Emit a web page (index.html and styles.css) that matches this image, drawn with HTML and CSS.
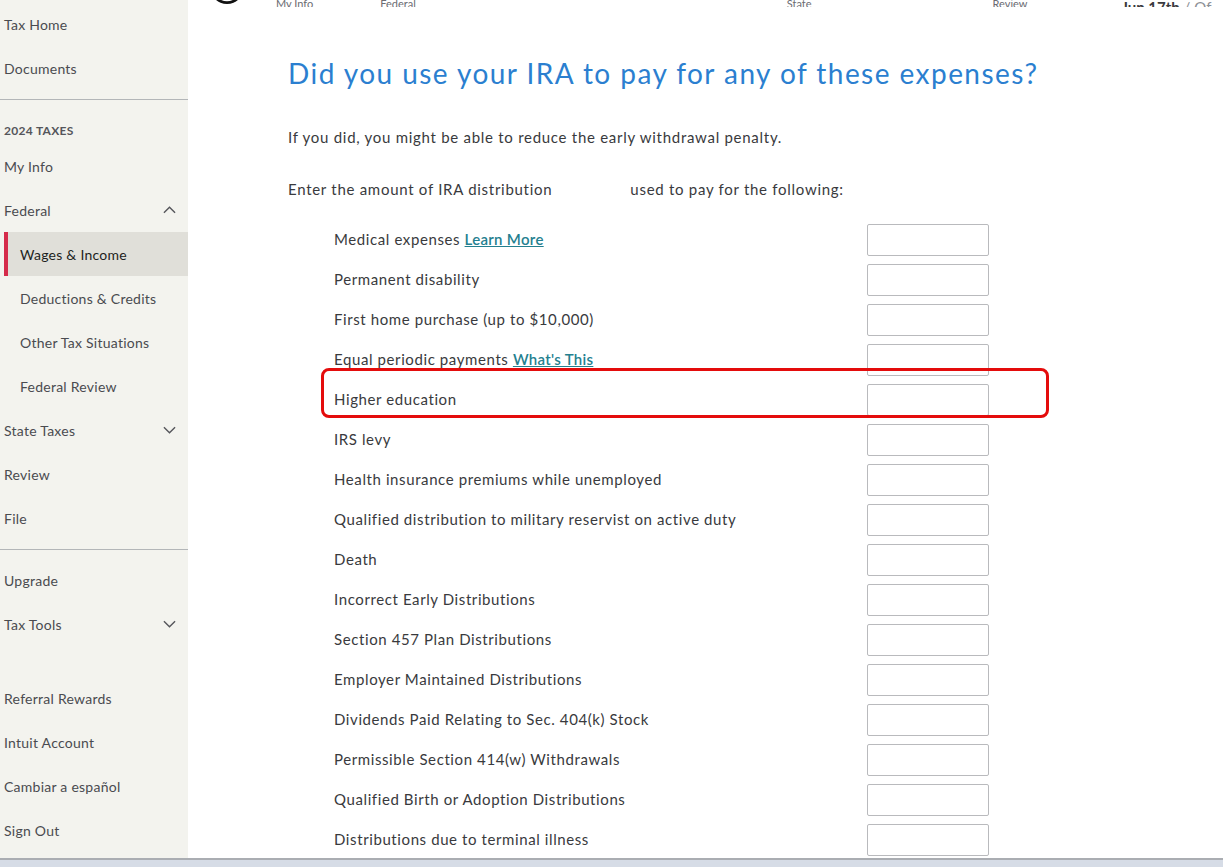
FILE: index.html
```html
<!DOCTYPE html>
<html lang="en">
<head>
  <meta charset="UTF-8">
  <meta name="viewport" content="width=device-width, initial-scale=1.0">
  <title>TurboTax - IRA Expenses</title>
  <link rel="stylesheet" href="styles.css">
</head>
<body>
  <div class="app">
    <nav class="sidebar">
      <a class="nav-item">Tax Home</a>
      <a class="nav-item">Documents</a>
      <hr class="nav-divider">
      <div class="nav-heading">2024 TAXES</div>
      <a class="nav-item">My Info</a>
      <a class="nav-item has-chevron">Federal
        <svg class="chevron" viewBox="0 0 14 8"><path d="M1 7 L7 1 L13 7"/></svg>
      </a>
      <a class="nav-item sub active">Wages &amp; Income</a>
      <a class="nav-item sub">Deductions &amp; Credits</a>
      <a class="nav-item sub">Other Tax Situations</a>
      <a class="nav-item sub">Federal Review</a>
      <a class="nav-item has-chevron">State Taxes
        <svg class="chevron" viewBox="0 0 14 8"><path d="M1 1 L7 7 L13 1"/></svg>
      </a>
      <a class="nav-item">Review</a>
      <a class="nav-item">File</a>
      <hr class="nav-divider">
      <a class="nav-item">Upgrade</a>
      <a class="nav-item has-chevron">Tax Tools
        <svg class="chevron" viewBox="0 0 14 8"><path d="M1 1 L7 7 L13 1"/></svg>
      </a>
      <div class="nav-gap"></div>
      <a class="nav-item">Referral Rewards</a>
      <a class="nav-item">Intuit Account</a>
      <a class="nav-item">Cambiar a español</a>
      <a class="nav-item">Sign Out</a>
    </nav>

    <main class="content">
      <header class="steps">
        <div class="steps-inner">
          <svg class="logo" viewBox="0 0 36 36"><circle cx="18" cy="18" r="17" fill="#111"/><path d="M8 27 Q18 35 28 27" stroke="#fff" stroke-width="2.5" fill="none"/></svg>
          <span class="step step-myinfo">My Info</span>
          <span class="step step-federal">Federal</span>
          <span class="step step-state">State</span>
          <span class="step step-review">Review</span>
          <span class="step-date"><b>Jun 17th</b> / Of</span>
        </div>
      </header>

      <h1 class="title">Did you use your IRA to pay for any of these expenses?</h1>
      <p class="intro">If you did, you might be able to reduce the early withdrawal penalty.</p>
      <p class="intro">Enter the amount of IRA distribution<span class="redacted"></span>used to pay for the following:</p>

      <div class="expense-list">
        <label class="expense-row"><span>Medical expenses <a class="link">Learn More</a></span><input type="text"></label>
        <label class="expense-row"><span>Permanent disability</span><input type="text"></label>
        <label class="expense-row"><span>First home purchase (up to $10,000)</span><input type="text"></label>
        <label class="expense-row"><span>Equal periodic payments <a class="link">What's This</a></span><input type="text"></label>
        <label class="expense-row highlighted"><span>Higher education</span><input type="text"></label>
        <label class="expense-row"><span>IRS levy</span><input type="text"></label>
        <label class="expense-row"><span>Health insurance premiums while unemployed</span><input type="text"></label>
        <label class="expense-row"><span>Qualified distribution to military reservist on active duty</span><input type="text"></label>
        <label class="expense-row"><span>Death</span><input type="text"></label>
        <label class="expense-row"><span>Incorrect Early Distributions</span><input type="text"></label>
        <label class="expense-row"><span>Section 457 Plan Distributions</span><input type="text"></label>
        <label class="expense-row"><span>Employer Maintained Distributions</span><input type="text"></label>
        <label class="expense-row"><span>Dividends Paid Relating to Sec. 404(k) Stock</span><input type="text"></label>
        <label class="expense-row"><span>Permissible Section 414(w) Withdrawals</span><input type="text"></label>
        <label class="expense-row"><span>Qualified Birth or Adoption Distributions</span><input type="text"></label>
        <label class="expense-row"><span>Distributions due to terminal illness</span><input type="text"></label>
      </div>
    </main>
  </div>
  <div class="taskbar"></div>
</body>
</html>
```

FILE: styles.css
```css
body {
  margin: 0;
  padding: 0;
  font-family: Lato, "Open Sans", Arial, sans-serif;
  color: #393a3d;
  background-color: #ffffff;
  overflow: hidden;
}
.app {
  display: flex;
  height: 858px;
  overflow: hidden;
}

/* sidebar */
.sidebar {
  width: 188px;
  flex-shrink: 0;
  background-color: #f3f3ee;
  padding-top: 2px;
  display: flex;
  flex-direction: column;
}
.nav-item {
  display: flex;
  align-items: center;
  justify-content: space-between;
  height: 44px;
  flex-shrink: 0;
  padding: 0 12px 0 4px;
  font-size: 14px;
  letter-spacing: 0.25px;
  color: #4a4b50;
  cursor: pointer;
}
.nav-item.sub {
  margin-left: 4px;
  padding-left: 12px;
  border-left: 4px solid transparent;
}
.nav-item.active {
  background-color: #e0dfd9;
  border-left-color: #d52b4a;
  color: #1e1f22;
}
.chevron {
  width: 13px;
  height: 8px;
  fill: none;
  stroke: #55565b;
  stroke-width: 1.5;
}
.nav-divider {
  border: none;
  border-top: 1px solid #b3b6b8;
  margin: 9px 0 0 0;
  height: 0;
}
.sidebar hr + .nav-item {
  margin-top: 8px;
}
.nav-heading {
  font-size: 12px;
  font-weight: 700;
  letter-spacing: 0.3px;
  color: #55565b;
  padding: 23px 4px 5px;
  line-height: 16px;
}
.nav-gap {
  height: 30px;
  flex-shrink: 0;
}

/* main */
.content {
  flex: 1;
  padding-left: 100px;
}
.steps {
  height: 7px;
  overflow: hidden;
  margin-left: -100px;
}
.steps-inner {
  display: flex;
  align-items: flex-end;
  height: 7px;
  font-size: 11px;
  color: #6b6c72;
  line-height: 14px;
}
.logo {
  width: 36px;
  height: 36px;
  margin-left: 21px;
  flex-shrink: 0;
  margin-bottom: 2px;
}
.step {
  flex-shrink: 0;
  margin-bottom: -4px;
}
.step-myinfo { margin-left: 31px; }
.step-federal { margin-left: 67px; }
.step-state { margin-left: 371px; }
.step-review { margin-left: 181px; }
.step-date {
  margin-left: 94px;
  margin-bottom: -9px;
  font-size: 15px;
  line-height: 18px;
  color: #8d9096;
  white-space: nowrap;
}
.step-date b {
  color: #393a3d;
}

.title {
  margin: 48px 0 0;
  font-size: 28px;
  font-weight: 400;
  line-height: 36px;
  color: #2b7fd0;
  letter-spacing: 1.45px;
}
.intro {
  margin: 35px 0 0;
  font-size: 15px;
  line-height: 22px;
  letter-spacing: 0.72px;
}
.intro + .intro {
  margin-top: 30px;
}
.intro .redacted {
  display: inline-block;
  width: 78px;
}

.expense-list {
  margin-top: 19px;
  padding-left: 46px;
}
.expense-row {
  display: flex;
  align-items: center;
  justify-content: space-between;
  width: 655px;
  height: 40px;
  font-size: 15px;
  letter-spacing: 0.6px;
  position: relative;
}
.expense-row input {
  width: 122px;
  height: 32px;
  margin-top: 2px;
  box-sizing: border-box;
  border: 1px solid #b9babd;
  border-radius: 2px;
  font-family: inherit;
  font-size: 15px;
  padding: 0 8px;
}
.link {
  color: #24808f;
  text-decoration: underline;
  font-weight: 600;
  letter-spacing: 0.3px;
  cursor: pointer;
}
.highlighted::after {
  content: "";
  position: absolute;
  left: -13px;
  top: -11px;
  width: 728px;
  height: 50px;
  box-sizing: border-box;
  border: 3px solid #e40c0c;
  border-radius: 8px;
  pointer-events: none;
}

.taskbar {
  height: 9px;
  border-top: 2px solid #aaadb2;
  box-sizing: border-box;
  background-color: #d6dce6;
}
```
